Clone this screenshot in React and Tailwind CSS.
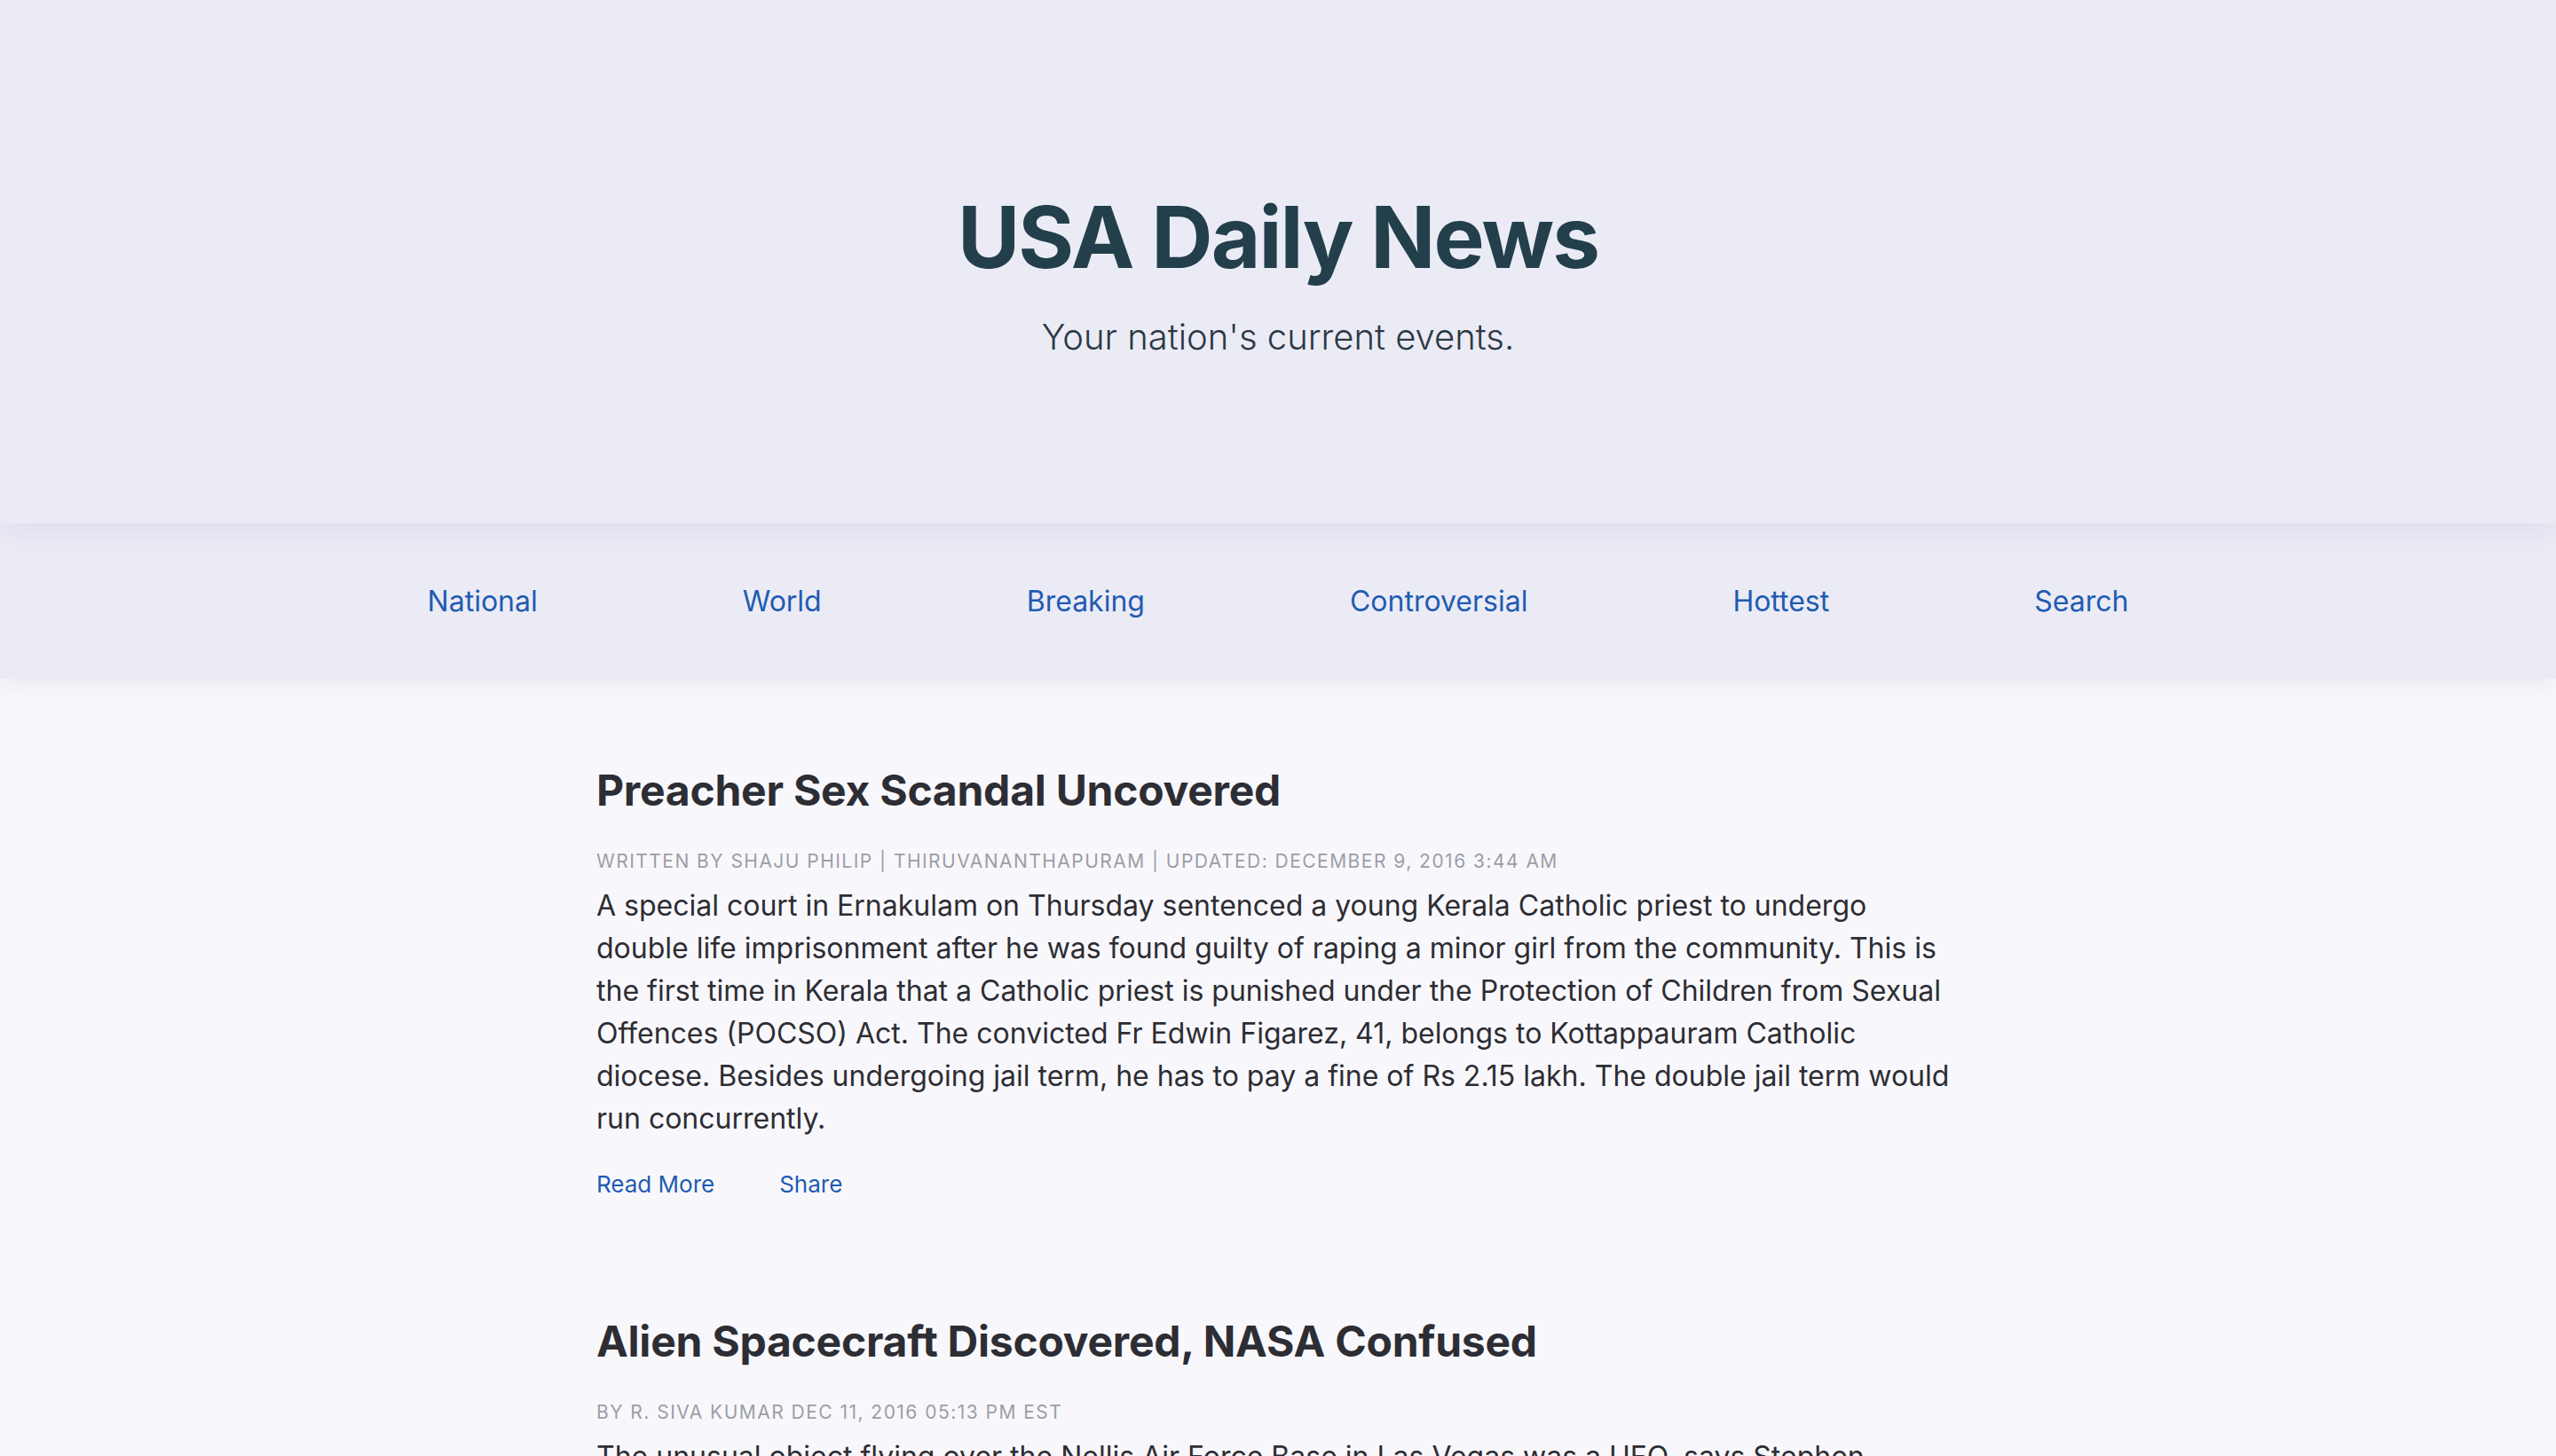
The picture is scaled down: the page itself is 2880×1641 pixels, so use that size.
const navLinks = ['National', 'World', 'Breaking', 'Controversial', 'Hottest', 'Search']

const articles = [
  {
    title: 'Preacher Sex Scandal Uncovered',
    meta: 'Written by Shaju Philip | Thiruvananthapuram | Updated: December 9, 2016 3:44 am',
    body: 'A special court in Ernakulam on Thursday sentenced a young Kerala Catholic priest to undergo double life imprisonment after he was found guilty of raping a minor girl from the community. This is the first time in Kerala that a Catholic priest is punished under the Protection of Children from Sexual Offences (POCSO) Act. The convicted Fr Edwin Figarez, 41, belongs to Kottappauram Catholic diocese. Besides undergoing jail term, he has to pay a fine of Rs 2.15 lakh. The double jail term would run concurrently.',
  },
  {
    title: 'Alien Spacecraft Discovered, NASA Confused',
    meta: 'By R. Siva Kumar Dec 11, 2016 05:13 PM EST',
    body: 'The unusual object flying over the Nellis Air Force Base in Las Vegas was a UFO, says Stephen Bassett, who has been studying the phenomenon for years. Officials have so far declined to comment on the sighting.',
  },
]

const App = () => {
  return (
    <div className="min-h-screen bg-[#f8f8fc] font-['Inter','Liberation_Sans',sans-serif]">
      {/* cabecera */}
      <header className="relative z-20 bg-[#ebebf6] pt-[219px] pb-[190px] text-center shadow-[0_6px_30px_rgba(40,40,90,0.07)]">
        <h1 className="text-[96px] leading-none font-bold tracking-[-0.02em] text-[#233f4c]">USA Daily News</h1>
        <p className="mt-[45px] text-[40px] leading-none font-light text-[#2b3944]">Your nation's current events.</p>
      </header>

      <nav className="relative z-10 flex h-[175px] items-center justify-center gap-[231px] bg-[#ebebf6] shadow-[0_6px_30px_rgba(40,40,90,0.08)]">
        {navLinks.map(link => (
          <a key={link} href="#" className="text-[32px] leading-none text-[#1f5bb2]">
            {link}
          </a>
        ))}
      </nav>

      <main className="mx-auto max-w-[1536px] pt-[102px]">
        {articles.map(article => (
          <article key={article.title} className="mb-[140px]">
            <h2 className="text-[48px] leading-none font-bold tracking-[-0.005em] text-[#2d2d34]">{article.title}</h2>
            <p className="mt-[45px] text-[21px] leading-none uppercase tracking-[0.07em] text-[#9d9da6]">{article.meta}</p>
            <p className="mt-[16px] text-[32px] leading-[48px] text-[#2d2d33]">{article.body}</p>
            <div className="mt-[37px] flex gap-[73px] text-[26px] leading-none text-[#1f5bb2]">
              <a href="#">Read More</a>
              <a href="#">Share</a>
            </div>
          </article>
        ))}
      </main>
    </div>
  )
}

export default App
